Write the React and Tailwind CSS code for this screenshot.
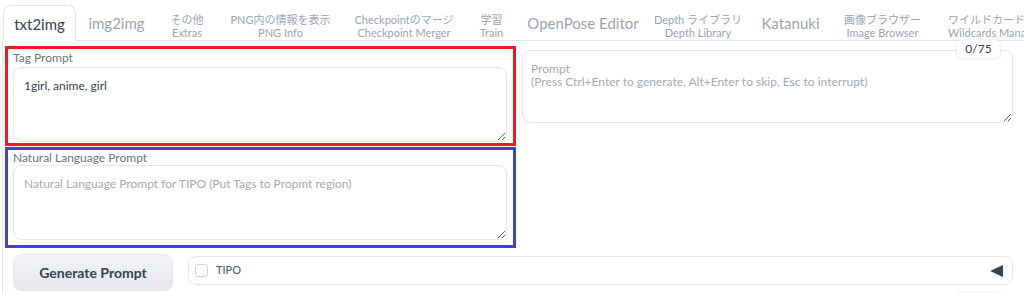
import React from "react";

const tabs = [
  { w: "w-[81px]", one: "img2img" },
  { w: "w-[60px]", top: "その他", bottom: "Extras" },
  { w: "w-[127px]", top: "PNG内の情報を表示", bottom: "PNG Info" },
  { w: "w-[120px]", top: "Checkpointのマージ", bottom: "Checkpoint Merger" },
  { w: "w-[55px]", top: "学習", bottom: "Train" },
  { w: "w-[128px]", one: "OpenPose Editor" },
  { w: "w-[102px]", top: "Depth ライブラリ", bottom: "Depth Library" },
  { w: "w-[83px]", one: "Katanuki" },
  { w: "w-[101px]", top: "画像ブラウザー", bottom: "Image Browser" },
  { w: "w-[140px]", top: "ワイルドカードの管理", bottom: "Wildcards Manager", left: true },
];

function Tab({ tab }) {
  if (tab.one) {
    return (
      <div className={`${tab.w} shrink-0 flex items-center justify-center pt-[2px] text-[15px] text-[#9ca3af] whitespace-nowrap`}>
        {tab.one}
      </div>
    );
  }
  return (
    <div
      className={`${tab.w} shrink-0 flex flex-col justify-center pt-[7px] text-[11px] leading-[13px] text-[#9ca3af] whitespace-nowrap ${
        tab.left ? "items-start pl-[15px]" : "items-center"
      }`}
    >
      <span>{tab.top}</span>
      <span>{tab.bottom}</span>
    </div>
  );
}

function Field({ label, value, placeholder, labelH }) {
  return (
    <>
      <div className={`${labelH} flex items-center text-[12px] text-[#6b7280]`}>{label}</div>
      <textarea
        readOnly
        defaultValue={value}
        placeholder={placeholder}
        className="block w-full h-[75px] rounded-[8px] border border-[#e5e7eb] bg-white pl-[10px] pt-[11px] text-[12px] leading-[13px] text-[#374151] placeholder:text-[#a4a9b3] outline-none"
      />
    </>
  );
}

export default function App() {
  return (
    <div className="w-[1024px] h-[293px] overflow-hidden bg-white font-['Lato','Noto_Sans_CJK_JP',sans-serif]">
      <div className="flex h-[41px] pt-[5px] pl-[3px]">
        <div className="w-[73px] h-[36px] shrink-0 flex items-center justify-center pt-[2px] rounded-t-[8px] border border-b-0 border-[#e5e7eb] text-[15px] text-[#374151]">
          txt2img
        </div>
        <div className="flex flex-1 h-[36px] border-b border-[#e5e7eb] overflow-hidden">
          {tabs.map((t, i) => (
            <Tab key={i} tab={t} />
          ))}
        </div>
      </div>

      <div className="ml-[2px] border-l border-[#e5e7eb] pl-[2px] pt-[5px]">
        <div className="flex gap-[6px]">
          <div className="w-[511px] shrink-0">
            <div className="h-[100px] border-[3px] border-[#ec1c24] pl-[5px] pr-[6px]">
              <Field label="Tag Prompt" value="1girl, anime, girl" labelH="h-[18px]" />
            </div>
            <div className="mt-[1px] h-[101px] border-[3px] border-[#3d44c9] pl-[5px] pr-[6px]">
              <Field
                label="Natural Language Prompt"
                placeholder="Natural Language Prompt for TIPO (Put Tags to Propmt region)"
                labelH="h-[15px]"
              />
            </div>
          </div>
          <div className="relative w-[491px] mt-[4px] h-[73px]">
            <textarea
              readOnly
              placeholder={"Prompt\n(Press Ctrl+Enter to generate, Alt+Enter to skip, Esc to interrupt)"}
              className="block w-full h-[73px] rounded-[8px] border border-[#e5e7eb] bg-white pl-[8px] pt-[11px] text-[12px] leading-[13px] text-[#374151] placeholder:text-[#a4a9b3] outline-none"
            />
            <div className="absolute -top-[10px] right-[13px] w-[43px] h-[18px] flex items-center justify-center rounded-[5px] bg-white shadow-[0_0_3px_1px_rgba(0,0,0,0.08)] text-[12px] text-[#374151]">
              0/75
            </div>
          </div>
        </div>

        <div className="flex gap-[15px] mt-[6px] ml-[8px]">
          <button className="w-[160px] h-[37px] shrink-0 rounded-[8px] border border-[#e5e7eb] bg-gradient-to-b from-[#f3f4f6] to-[#e5e7eb] text-[14px] font-bold text-[#374151]">
            Generate Prompt
          </button>
          <div className="flex flex-col w-[825px] mt-[2px]">
            <div className="h-[29px] flex items-center rounded-[8px] border border-[#e5e7eb] pl-[6px] pr-[9px]">
              <span className="w-[13px] h-[13px] rounded-[3px] border border-[#d1d5db] bg-white" />
              <span className="ml-[8px] text-[11px] text-[#4b5563]">TIPO</span>
              <svg className="ml-auto" width="13" height="12" viewBox="0 0 13 12">
                <polygon points="0,6 13,0 13,12" fill="#374151" />
              </svg>
            </div>
            <div className="self-end mr-[12px] mt-[5px] w-[44px] h-[12px] rounded-t-[6px] bg-[#f9fafb] shadow-[0_0_2px_rgba(0,0,0,0.06)]" />
          </div>
        </div>
      </div>
    </div>
  );
}
